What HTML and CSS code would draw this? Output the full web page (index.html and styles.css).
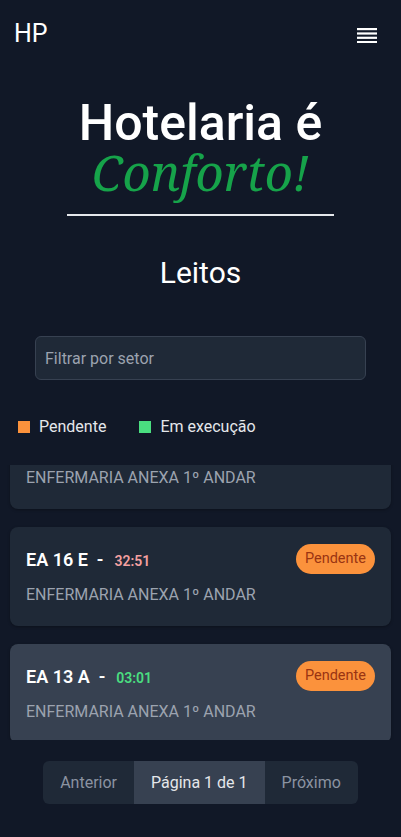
FILE: index.html
```html
<!DOCTYPE html>
<html lang="pt-BR">
<head>
<meta charset="utf-8">
<title>Leitos</title>
<link rel="stylesheet" href="styles.css">
</head>
<body>
<header class="topbar">
  <div class="logo">HP</div>
  <button class="menu" aria-label="Menu">
    <svg width="20" height="16" viewBox="0 0 20 16"><g fill="#ffffff"><rect x="0" y="1" width="20" height="2.2"/><rect x="0" y="5.4" width="20" height="2.2"/><rect x="0" y="9.7" width="20" height="2.2"/><rect x="0" y="14" width="20" height="2.2"/></g></svg>
  </button>
</header>

<section class="hero">
  <h1 class="hero-title">Hotelaria é</h1>
  <div class="hero-accent">Conforto!</div>
  <div class="hero-rule"></div>
</section>

<h2 class="section-title">Leitos</h2>

<div class="filter">
  <input class="filter-input" type="text" placeholder="Filtrar por setor">
</div>

<div class="legend">
  <span class="legend-item"><span class="swatch swatch-pending"></span>Pendente</span>
  <span class="legend-item"><span class="swatch swatch-running"></span>Em execução</span>
</div>

<div class="list">
  <div class="list-inner">
    <div class="card">
      <div class="card-row">
        <div class="card-title"><span class="bed">EA 18 B</span><span class="dash">-</span><span class="time time-red">40:12</span></div>
        <span class="badge">Pendente</span>
      </div>
      <div class="card-sub">ENFERMARIA ANEXA 1º ANDAR</div>
    </div>
    <div class="card">
      <div class="card-row">
        <div class="card-title"><span class="bed">EA 16 E</span><span class="dash">-</span><span class="time time-red">32:51</span></div>
        <span class="badge">Pendente</span>
      </div>
      <div class="card-sub">ENFERMARIA ANEXA 1º ANDAR</div>
    </div>
    <div class="card card-active">
      <div class="card-row">
        <div class="card-title"><span class="bed">EA 13 A</span><span class="dash">-</span><span class="time time-green">03:01</span></div>
        <span class="badge">Pendente</span>
      </div>
      <div class="card-sub">ENFERMARIA ANEXA 1º ANDAR</div>
    </div>
  </div>
</div>

<nav class="pager">
  <span class="pager-btn">Anterior</span>
  <span class="pager-current">Página 1 de 1</span>
  <span class="pager-btn">Próximo</span>
</nav>
</body>
</html>
```

FILE: styles.css
```css
* { box-sizing: border-box; }

html, body {
  margin: 0;
  padding: 0;
  background: #111827;
  color: #ffffff;
  font-family: Roboto, "Liberation Sans", sans-serif;
}

.topbar {
  display: flex;
  justify-content: space-between;
  align-items: center;
  padding: 17px 24px 0 14px;
  height: 50px;
}

.logo {
  font-size: 25px;
  line-height: 30px;
  font-weight: 400;
}

.menu {
  background: none;
  border: 0;
  padding: 0;
  display: flex;
  margin-top: 3px;
}

.hero {
  display: flex;
  flex-direction: column;
  align-items: center;
  margin-top: 46px;
}

.hero-title {
  margin: 0;
  font-size: 50px;
  line-height: 54px;
  font-weight: 500;
}

.hero-accent {
  font-family: "Noto Serif", "DejaVu Serif", serif;
  font-style: italic;
  font-size: 49px;
  line-height: 44px;
  color: #16a34a;
}

.hero-rule {
  width: 267px;
  height: 2px;
  background: #e5e7eb;
  margin-top: 20px;
}

.section-title {
  margin: 39px 0 0;
  text-align: center;
  font-size: 30px;
  line-height: 36px;
  font-weight: 400;
}

.filter {
  display: flex;
  justify-content: center;
  margin-top: 45px;
}

.filter-input {
  width: 331px;
  height: 44px;
  background: #1f2937;
  border: 1px solid #374151;
  border-radius: 6px;
  padding: 0 9px;
  font-family: Roboto, "Liberation Sans", sans-serif;
  font-size: 16px;
  color: #e5e7eb;
}

.filter-input::placeholder { color: #9ca3af; }

.legend {
  display: flex;
  gap: 33px;
  padding: 0 18px;
  margin-top: 36px;
  font-size: 16px;
  line-height: 22px;
  color: #e5e7eb;
}

.legend-item {
  display: flex;
  align-items: center;
  gap: 9px;
}

.swatch {
  width: 12px;
  height: 12px;
  display: inline-block;
}

.swatch-pending { background: #fb923c; }
.swatch-running { background: #4ade80; }

.list {
  margin-top: 27px;
  height: 275px;
  overflow: hidden;
}

.list-inner {
  display: flex;
  flex-direction: column;
  gap: 18px;
  padding: 0 10px;
  margin-top: -55px;
}

.card {
  background: #1f2937;
  border-radius: 8px;
  padding: 17px 16px 19px;
  display: flex;
  flex-direction: column;
  gap: 9px;
  box-shadow: 0 1px 3px rgba(0,0,0,0.3);
}

.card-active { background: #374151; }

.card-row {
  display: flex;
  justify-content: space-between;
  align-items: center;
  height: 30px;
}

.card-title {
  display: flex;
  align-items: baseline;
  gap: 9px;
}

.bed {
  font-size: 18px;
  font-weight: 600;
  color: #ffffff;
}

.dash {
  font-size: 18px;
  font-weight: 600;
  color: #ffffff;
}

.time {
  font-size: 14px;
  font-weight: 600;
  margin-left: 2px;
}

.time-red { color: #f4a0a0; }
.time-green { color: #4ade80; }

.badge {
  background: #fb923c;
  color: #9a3412;
  font-size: 14.5px;
  line-height: 30px;
  height: 30px;
  padding: 0 9px;
  border-radius: 15px;
}

.card-sub {
  font-size: 16px;
  line-height: 24px;
  color: #9ca3af;
}

.pager {
  display: flex;
  justify-content: center;
  margin-top: 21px;
}

.pager > span {
  font-size: 16px;
  line-height: 43px;
  height: 43px;
  padding: 0 17px;
}

.pager-btn {
  background: #1f2937;
  color: #8b93a1;
}

.pager-btn:first-child { border-radius: 6px 0 0 6px; }
.pager-btn:last-child { border-radius: 0 6px 6px 0; }

.pager-current {
  background: #374151;
  color: #e5e7eb;
}
```
